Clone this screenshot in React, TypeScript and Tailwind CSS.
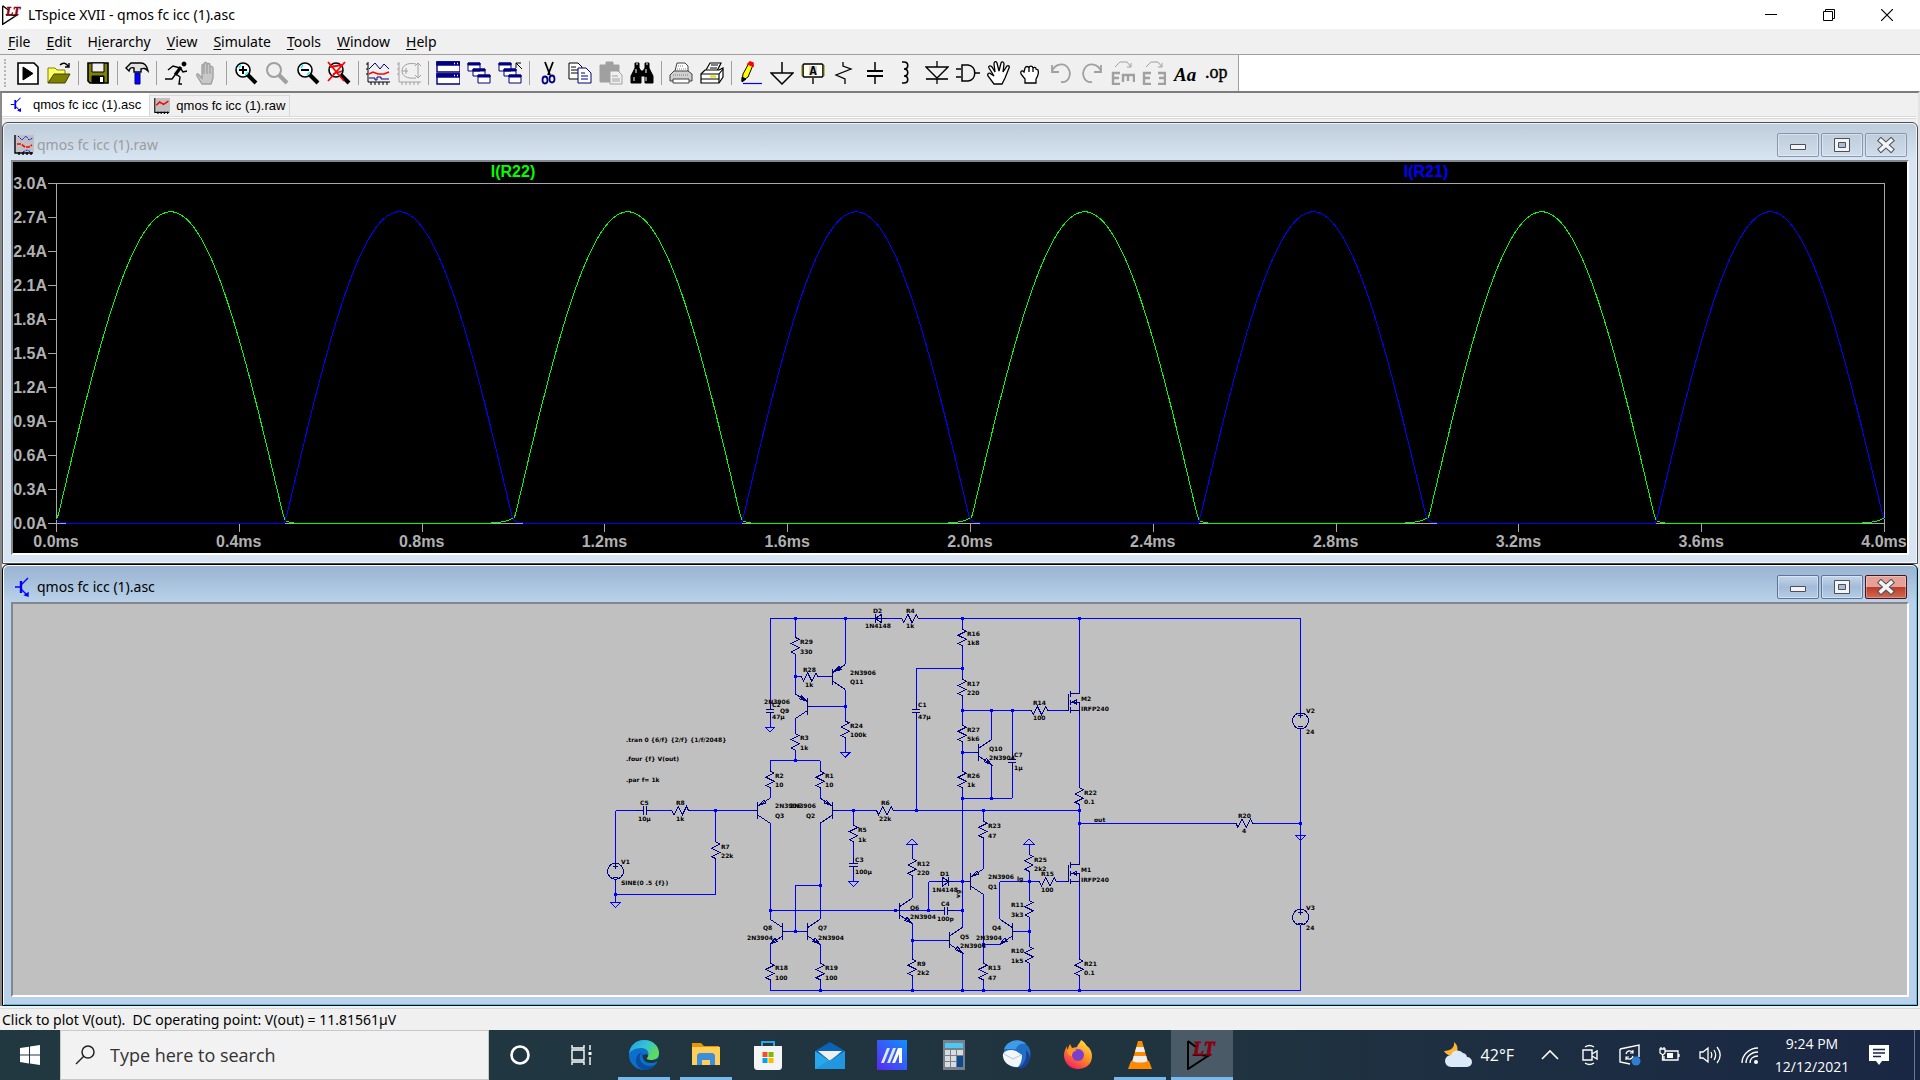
import type { ReactNode } from 'react'

type Point = [number, number]

/* ---------- shared bits ---------- */

function Icon({ children, size = 24, box = 24 }: { children: ReactNode; size?: number; box?: number }) {
  return (
    <svg width={size} height={size} viewBox={`0 0 ${box} ${box}`} fill="none" stroke="#000" aria-hidden="true">
      {children}
    </svg>
  )
}

function LtLogo({ size }: { size: number }) {
  return (
    <Icon size={size} box={30}>
      <path d="M1 1v28L24 14M1 1l8 6M6 15h8l8 1" strokeWidth="2" />
      <text x="6" y="15" fontFamily="Liberation Serif, serif" fontSize="18" fontWeight="700" fontStyle="italic" fill="#8b0010" stroke="#8b0010" strokeWidth="0.8">
        LT
      </text>
    </Icon>
  )
}

function TransistorIcon({ size }: { size: number }) {
  return (
    <Icon size={size} box={20}>
      <g stroke="#00f" strokeWidth="1.4">
        <path d="M1 10h5M14 1l-7 7M7 12l6 6" />
        <path d="M7 4v12" strokeWidth="2.4" />
        <path d="M11 18l3 1v-3z" fill="#00f" />
      </g>
    </Icon>
  )
}

function PlotIcon({ size, faded }: { size: number; faded?: boolean }) {
  return (
    <Icon size={size} box={20}>
      <path d="M2 0h18v17H2z" fill="#c0c0c0" stroke="none" />
      <path d="M1 0v18h18M5 17v3M9 17v3M13 17v3M17 17v3" strokeWidth="1.4" />
      {faded ? (
        <>
          <path d="M4 1l4 4 4-4 3 4 4-2M9 17l4-2 4 2" stroke="#00f" strokeDasharray="2 1" />
          <path d="M3 9h4l4 3h4l3-2" stroke="#f00" strokeWidth="1.6" strokeDasharray="4 1" />
        </>
      ) : (
        <path d="M3 9l4-4 5 3 6-4" stroke="#f00" strokeWidth="2" />
      )}
    </Icon>
  )
}

/* ---------- toolbar ---------- */

const lens = (
  <>
    <circle cx="9" cy="9" r="7" fill="#fff" strokeWidth="1.6" />
    <path d="M5 7l2-3M11 14l3-3" stroke="#0ff" strokeWidth="1.4" />
    <path d="M14 14l8 8" strokeWidth="4" />
  </>
)

const cascade = (
  <g stroke="#000080" fill="#fff">
    <path d="M1 2h12v8H1zM6 8h12v7H6zM11 14h12v8H11z" />
    <path d="M1 2h12v2H1zM6 8h12v2H6zM11 14h12v2H11z" fill="#000080" />
  </g>
)

const toolGroups: { name: string; icon: ReactNode }[][] = [
  [
    {
      name: 'New schematic',
      icon: (
        <>
          <path d="M2 2h16l4 4v17H2z" fill="#fff" strokeWidth="1.6" />
          <path d="M7 6v13l10-6.5z" fill="#000" />
        </>
      ),
    },
    {
      name: 'Open',
      icon: (
        <>
          <path d="M1 22V7h7l2 2h8v4" fill="#ffff60" stroke="#808000" />
          <path d="M1 22l6-9h16l-5 9z" fill="#808000" stroke="#404000" />
          <path d="M13 4c3-3 6-2 8 1M22 2v4h-4" strokeWidth="1.4" />
        </>
      ),
    },
  ],
  [
    {
      name: 'Save',
      icon: (
        <>
          <path d="M2 2h20v20H4l-2-2z" fill="#808000" strokeWidth="1.6" />
          <path d="M6 2h12v9H6z" fill="#f0f0f0" />
          <path d="M6 15h12v7H6z" fill="#000" />
          <path d="M14 16h3v5h-3z" fill="#fff" stroke="none" />
        </>
      ),
    },
  ],
  [
    {
      name: 'Control panel',
      icon: (
        <>
          <path d="M1 7l5-5h10c4 0 6 3 7 8-3-3-4-3-7-2v3H9V7c-3-1-4 0-5 3z" fill="#e0e0e0" strokeWidth="1.4" />
          <path d="M10 12h5v11h-5z" fill="#00f" stroke="#000080" />
        </>
      ),
    },
  ],
  [
    {
      name: 'Run',
      icon: (
        <>
          <circle cx="20" cy="3" r="2" fill="#000" />
          <path d="M17 6l-6 8" strokeWidth="3.2" />
          <path d="M16 7L9 5 4 9M17 8l2 3 4-1M12 13l4 3-1 7h3M11 14l-3 4H1" strokeWidth="1.4" />
        </>
      ),
    },
    {
      name: 'Halt',
      icon: (
        <path
          d="M7 23l-5-8c-1-2 1-3 2-1l3 3V5c0-2 2-2 2 0V3c0-2 3-2 3 0v1c0-2 3-2 3 0v2c0-1 3-1 3 1v10l-2 6zM9 5v8M12 4v9M15 6v7"
          fill="#c8c8c8"
          stroke="#a0a0a0"
          strokeWidth="1.4"
        />
      ),
    },
  ],
  [
    {
      name: 'Zoom in',
      icon: (
        <>
          {lens}
          <path d="M5 9h8M9 5v8" strokeWidth="2" />
        </>
      ),
    },
    {
      name: 'Pan',
      icon: (
        <g stroke="#a0a0a0">
          <circle cx="9" cy="9" r="7" strokeWidth="2" />
          <path d="M14 14l8 8" strokeWidth="4" />
        </g>
      ),
    },
    {
      name: 'Zoom out',
      icon: (
        <>
          {lens}
          <path d="M5 9h8" strokeWidth="2" />
        </>
      ),
    },
    {
      name: 'Zoom full extents',
      icon: (
        <>
          {lens}
          <path d="M1 1l16 19M18 1L1 20M3 6l12-2M6 13l9-3" stroke="#f00" strokeWidth="1.8" />
        </>
      ),
    },
  ],
  [
    {
      name: 'Autorange',
      icon: (
        <>
          <path d="M2 1v20h22M0 3h2M0 8h2M0 13h2M5 21v3M9 21v3M13 21v3M17 21v3M21 21v3" />
          <path d="M3 8l6-6 5 6 4-5 5 5M3 17h6v2h2v-3h4v2h8" stroke="#000080" />
          <path d="M3 13l4-2 5 2h6l5-2" stroke="#f00" strokeWidth="1.4" />
        </>
      ),
    },
    {
      name: 'Plot settings',
      icon: (
        <g stroke="#a0a0a0">
          <path d="M2 1v20h22M0 3h2M0 8h2M0 13h2M5 21v3M9 21v3M13 21v3M17 21v3M21 21v3" />
          <path d="M21 2v15M18 5l3-3 3 3M18 14l3 3 3-3M19 3C10 1 5 5 5 10s5 8 14 7M5 10h6M9 7v6" />
        </g>
      ),
    },
  ],
  [
    {
      name: 'Tile windows',
      icon: (
        <g fill="#fff" stroke="#000080" strokeWidth="1.4">
          <path d="M1 1h23v10H1zM1 13h23v10H1z" />
          <path d="M1 1h23v3H1zM1 13h23v3H1z" fill="#000080" />
          <path d="M18 2.500h1M21 2.500h1M18 14.500h1M21 14.500h1" stroke="#fff" />
        </g>
      ),
    },
    { name: 'Cascade windows', icon: cascade },
    {
      name: 'Close all windows',
      icon: (
        <>
          {cascade}
          <path d="M18 7V2h5M18 2l6 6" />
        </>
      ),
    },
  ],
  [
    {
      name: 'Cut',
      icon: (
        <>
          <path d="M8 1l5 13M16 1l-5 13" strokeWidth="1.8" />
          <g stroke="#000080" strokeWidth="1.8">
            <ellipse cx="8" cy="19" rx="2.500" ry="3.500" />
            <ellipse cx="15" cy="18" rx="2.500" ry="3.500" />
          </g>
        </>
      ),
    },
    {
      name: 'Copy',
      icon: (
        <>
          <path d="M1 2h9l4 4v12H1z" fill="#fff" />
          <path d="M3 6h5M3 9h7M3 12h7" />
          <path d="M10 7h8l5 5v10H10z" fill="#fff" stroke="#000080" />
          <path d="M13 12h4M13 15h7M13 18h7" stroke="#000080" />
        </>
      ),
    },
    {
      name: 'Paste',
      icon: (
        <>
          <path d="M1 4h19v17H1zM7 1h7v4H7z" fill="#a0a0a0" stroke="#a0a0a0" />
          <path d="M11 10h8l4 4v9H11z" fill="#f0f0f0" stroke="#a0a0a0" />
          <path d="M13 15h6M13 18h8M13 20h8" stroke="#a0a0a0" />
        </>
      ),
    },
    {
      name: 'Find',
      icon: (
        <>
          <path d="M5 2h4v5l2 3h2l2-3V2h4v5l4 8v7h-8v-7h-4v7H1v-7l4-8z" fill="#000" />
          <path d="M6 8v4M16 8v4M4 16v4M16 16v4M6 3h2M16 3h2" stroke="#fff" />
        </>
      ),
    },
  ],
  [
    {
      name: 'Print setup',
      icon: (
        <>
          <path d="M6 10l2-8h8l3 3v6" fill="#fff" stroke="#404040" />
          <path d="M1 14l4-4h14l4 3v7H1z" fill="#d0d0d0" stroke="#404040" />
          <path d="M4 18h16v4H4z" fill="#fff" stroke="#404040" />
          <path d="M9 5h6M8 8h9M4 14h16" stroke="#808080" strokeDasharray="1 1" />
        </>
      ),
    },
    {
      name: 'Print',
      icon: (
        <>
          <path d="M6 9l4-7h11l-4 8" fill="#fff" strokeWidth="1.200" />
          <path d="M11 4h7M10 7h7" />
          <path d="M1 13l4-4h14l4-2v9l-4 6H1z" fill="#fff" strokeWidth="1.200" />
          <path d="M1 13h18v9M19 13l4-5M1 18h18" strokeWidth="1.200" />
          <path d="M10 15.500h6" stroke="#dddd00" strokeWidth="2" />
        </>
      ),
    },
  ],
  [
    {
      name: 'Draw wire',
      icon: (
        <>
          <path d="M3 20l1-7 6-11 4 2-5 12z" fill="#ff0" />
          <path d="M3 21v-5l4 2z" fill="#000" />
          <path d="M9 3l2-2 3 1v3z" fill="#f00" stroke="#f00" strokeWidth="1.6" />
          <path d="M4 22.500h19" stroke="#00f" strokeWidth="1.2" />
        </>
      ),
    },
    { name: 'Ground', icon: <path d="M12 1v11M1 12h22L12 23z" strokeWidth="1.5" /> },
    {
      name: 'Label net',
      icon: (
        <>
          <path d="M3 3h18l1 1v11l-1 1H3l-1-1V4z" fill="#fffff0" strokeWidth="1.6" />
          <path d="M1 4v11M23 4v11" stroke="#808000" />
          <path d="M8 5h8v9H8z" fill="#d4d4d4" stroke="none" />
          <path d="M12 17v6" strokeWidth="1.4" />
          <text x="12" y="14" textAnchor="middle" fontFamily="Liberation Mono, monospace" fontSize="12" fontWeight="700" fill="#000" stroke="none">
            A
          </text>
        </>
      ),
    },
    { name: 'Resistor', icon: <path d="M11 1v4l8 3L4 14l9 4v5" strokeWidth="1.3" /> },
    {
      name: 'Capacitor',
      icon: (
        <>
          <path d="M12 1v9M12 14v9" strokeWidth="1.5" />
          <path d="M4 10h16M4 15h16" strokeWidth="2.2" />
        </>
      ),
    },
    { name: 'Inductor', icon: <path d="M8 1h2c5 0 5 7 0 7 5 0 5 7 0 7 5 0 5 7 0 7H8" strokeWidth="1.6" /> },
    {
      name: 'Diode',
      icon: (
        <>
          <path d="M12 0v6M12 18v5M1 6h22L12 17z" strokeWidth="1.3" />
          <path d="M1 18h22" strokeWidth="1.6" />
        </>
      ),
    },
    {
      name: 'Component',
      icon: (
        <>
          <path d="M0 8h5M0 16h5M18 12h6" strokeWidth="1.4" />
          <path d="M6 4v16h6c9-1 9-15 0-16z" strokeWidth="1.5" />
        </>
      ),
    },
    {
      name: 'Move',
      icon: (
        <path
          d="M7 23l-6-8c-1-2 1-4 3-2l3 2L2 7c-1-2 1-3 3-1l3 5L7 3c0-3 2-3 3-1l2 8 2-8c1-2 3-1 3 1l-1 8 4-6c1-1 3 0 2 2l-4 10-3 6z"
          fill="#fff"
          strokeWidth="1.3"
        />
      ),
    },
    {
      name: 'Drag',
      icon: (
        <path
          d="M7 22v-4l-4-5c-1-3 1-4 3-2l1-4c1-2 3-2 4 0 0-2 3-3 4 0 1-1 3-1 3 1l2 1c1 3 0 6-2 9v4zM11 7v4M15 7v4"
          fill="#fff"
          strokeWidth="1.3"
        />
      ),
    },
    { name: 'Undo', icon: <path d="M3 4v7h7M3 10C6 3 15 1 19 7s1 15-7 14" stroke="#a0a0a0" strokeWidth="1.8" /> },
    { name: 'Redo', icon: <path d="M21 4v7h-7M21 10C18 3 9 1 5 7s-1 15 7 14" stroke="#a0a0a0" strokeWidth="1.8" /> },
    {
      name: 'Rotate',
      icon: (
        <g stroke="#a0a0a0">
          <path d="M4 6l5-5h7l4 5M20 2v4h-4" />
          <path d="M9 12H2v11h7M2 17h6M12 21v-7h11v7M17 14v6" strokeWidth="2.4" />
        </g>
      ),
    },
    {
      name: 'Mirror',
      icon: (
        <g stroke="#a0a0a0">
          <path d="M4 6l5-5h7l4 5M20 2v4h-4" />
          <path d="M9 12H2v11h7M2 17h6M16 12h7v11h-7M23 17h-6" strokeWidth="2.4" />
        </g>
      ),
    },
    {
      name: 'Text',
      icon: (
        <text x="1" y="20" fontFamily="Liberation Serif, serif" fontSize="19" fontWeight="700" fontStyle="italic" fill="#000" stroke="none">
          Aa
        </text>
      ),
    },
    {
      name: 'SPICE directive',
      icon: (
        <text x="1" y="17" fontFamily="Liberation Serif, serif" fontSize="18" fill="#000" stroke="#000" strokeWidth="0.4">
          .op
        </text>
      ),
    },
  ],
]

function Toolbar() {
  return (
    <div role="toolbar" className="flex h-9 bg-white">
      <div className="flex items-center border-r border-[#a0a0a0] bg-[#f0f0f0] pr-[7px]">
        <span className="mr-1.5 ml-1 h-7 border-l-2 border-dotted border-[#b4b4b4]" />
        {toolGroups.map((group, i) => (
          <div key={i} className="flex items-center">
            {i > 0 && <span className="mx-[3px] h-6 w-0.5 border-r border-[#a0a0a0]" />}
            {group.map((tool) => (
              <button key={tool.name} type="button" aria-label={tool.name} className="flex h-9 w-[31px] items-center justify-center">
                <Icon>{tool.icon}</Icon>
              </button>
            ))}
          </div>
        ))}
      </div>
    </div>
  )
}

/* ---------- waveform ---------- */

const PEAK = 2.75
const PLOT = { left: 56, right: 1884, top: 183, bottom: 523 }

// Current through one output device, phase in periods (1 ms each)
function current(phase: number, leak: number) {
  const p = phase - Math.floor(phase)
  if (p <= 0.5) return Math.hypot(PEAK * Math.sin(2 * Math.PI * p), 0.04)
  return leak * Math.exp((p - 1) / 0.02) + 0.03 * Math.exp((0.5 - p) / 0.01)
}

function trace(shift: number, leak: number) {
  const points: string[] = []
  for (let x = PLOT.left; x <= PLOT.right; x += 1) {
    const t = ((x - PLOT.left) / (PLOT.right - PLOT.left)) * 4
    const y = PLOT.bottom - (current(t + shift, leak) / 3) * (PLOT.bottom - PLOT.top)
    points.push(`${x + 0.5},${(y + 0.5).toFixed(1)}`)
  }
  return points.join(' ')
}

function WaveformPlot() {
  const amps = Array.from({ length: 11 }, (_, i) => (3 - i * 0.3).toFixed(1) + 'A')
  const times = Array.from({ length: 11 }, (_, i) => (i * 0.4).toFixed(1) + 'ms')
  return (
    <svg className="block h-[391px] w-full bg-black" viewBox="13 162 1894 391" fill="none">
      <g shapeRendering="crispEdges">
        <rect x="56.500" y="183.500" width="1828" height="340" stroke="#a8a8a8" />
        {amps.map((label, i) => (
          <path key={label} d={`M48 ${183.5 + i * 34}h8`} stroke="#a8a8a8" />
        ))}
        {times.map((label, i) => (
          <path key={label} d={`M${56.5 + Math.round(i * 182.8)} 524v8`} stroke="#a8a8a8" />
        ))}
        <polyline points={trace(0, 0.05)} stroke="#00ff00" />
        <polyline points={trace(0.5, 0)} stroke="#0000ff" />
      </g>
      <g fontFamily="Liberation Sans, Arial, sans-serif" fontSize="16" fontWeight="700" fill="#b0b0b0">
        {amps.map((label, i) => (
          <text key={label} x="47" y={189 + i * 34} textAnchor="end">
            {label}
          </text>
        ))}
        {times.map((label, i) => (
          <text key={label} x={56 + i * 182.8} y="547" textAnchor="middle">
            {label}
          </text>
        ))}
        <text x="513" y="177" textAnchor="middle" fill="#00ff00">
          I(R22)
        </text>
        <text x="1426" y="177" textAnchor="middle" fill="#0000ff">
          I(R21)
        </text>
      </g>
    </svg>
  )
}

/* ---------- schematic ---------- */

// One grid step of the sheet, in drawing pixels
const GRID = 4.177
const gx = (c: number) => 615.5 + c * GRID
const gy = (r: number) => 618.5 + r * GRID

const line = (points: Point[], close = false) =>
  'M' + points.map(([c, r]) => `${gx(c).toFixed(2)} ${gy(r).toFixed(2)}`).join('L') + (close ? 'Z' : '')

// [column, row, column, row]
const wires: [number, number, number, number][] = [
  [37, 0, 61, 0], [65, 0, 68, 0], [73, 0, 164, 0], [37, 0, 37, 20], [37, 24, 37, 26],
  [43, 0, 43, 4], [43, 9, 43, 18], [43, 24, 43, 27], [43, 32, 43, 34], [43, 14, 44, 14], [49, 14, 51, 14],
  [55, 0, 55, 11], [55, 17, 55, 24], [55, 29, 55, 32], [47, 21, 55, 21],
  [37, 34, 49, 34], [37, 34, 37, 36], [49, 34, 49, 36], [37, 41, 37, 43], [49, 41, 49, 43],
  [37, 49, 37, 72], [49, 49, 49, 72], [43, 64, 49, 64], [43, 64, 43, 75], [41, 75, 45, 75],
  [37, 70, 77, 70], [81, 70, 83, 70], [37, 78, 37, 82], [49, 78, 49, 82], [37, 87, 37, 89], [49, 87, 49, 89],
  [37, 89, 164, 89], [0, 46, 5, 46], [9, 46, 13, 46], [18, 46, 33, 46], [53, 46, 62, 46], [67, 46, 111, 46],
  [0, 46, 0, 58], [0, 63, 0, 68], [0, 66, 24, 66], [24, 46, 24, 53], [24, 58, 24, 66],
  [57, 46, 57, 49], [57, 54, 57, 57], [57, 61, 57, 63], [72, 12, 72, 20], [72, 24, 72, 46], [72, 12, 83, 12],
  [83, 0, 83, 2], [83, 7, 83, 14], [83, 19, 83, 25], [83, 30, 83, 36], [83, 41, 83, 74], [83, 80, 83, 89],
  [83, 22, 99, 22], [104, 22, 108, 22], [83, 32, 86, 32], [90, 22, 90, 29], [90, 35, 90, 43],
  [95, 22, 95, 32], [95, 36, 95, 43], [83, 43, 95, 43], [111, 0, 111, 17], [111, 23, 111, 40],
  [111, 45, 111, 58], [111, 64, 111, 81], [111, 86, 111, 89], [111, 49, 148, 49], [153, 49, 164, 49],
  [164, 0, 164, 22], [164, 27, 164, 69], [164, 74, 164, 89], [88, 46, 88, 48], [88, 53, 88, 60],
  [88, 66, 88, 82], [88, 87, 88, 89], [88, 78, 92, 78], [92, 63, 92, 72], [92, 63, 101, 63], [106, 63, 108, 63],
  [75, 63, 77, 63], [81, 63, 84, 63], [75, 63, 75, 70], [71, 54, 71, 57], [71, 62, 71, 67], [71, 73, 71, 81],
  [71, 86, 71, 89], [71, 77, 79, 77], [99, 54, 99, 56], [99, 61, 99, 67], [99, 72, 99, 78], [99, 83, 99, 89],
  [96, 75, 99, 75],
]

const nodes: Point[] = [
  [43, 0], [55, 0], [83, 0], [111, 0], [83, 12], [43, 14], [55, 21], [83, 22], [90, 22], [95, 22], [83, 32],
  [43, 34], [83, 43], [90, 43], [72, 46], [24, 46], [57, 46], [88, 46], [111, 46], [111, 49], [164, 49],
  [83, 63], [99, 63], [49, 64], [0, 66], [37, 70], [67, 70], [75, 70], [83, 70], [43, 75], [99, 75],
  [71, 77], [88, 78], [49, 89], [71, 89], [83, 89], [88, 89], [99, 89], [111, 89],
]

const verticalResistors: Point[] = [
  [43, 4], [55, 24], [43, 27], [37, 36], [49, 36], [83, 2], [83, 14], [83, 25], [83, 36], [111, 40], [24, 53],
  [57, 49], [71, 57], [37, 82], [49, 82], [88, 82], [71, 81], [111, 81], [99, 78], [99, 67], [99, 56], [88, 48],
]
const horizontalResistors: Point[] = [[44, 14], [68, 0], [13, 46], [62, 46], [99, 22], [101, 63], [148, 49]]
const verticalCaps: Point[] = [[37, 20], [72, 20], [95, 32], [57, 57]]
const horizontalCaps: Point[] = [[5, 46], [77, 70]]
const grounds: Point[] = [[37, 26], [55, 32], [0, 68], [57, 63], [164, 52]]
const raisedGrounds: Point[] = [[71, 54], [99, 54]]
const sources: Point[] = [[0, 60.5], [164, 24.5], [164, 71.5]]

// Base column and row; dir is the side the collector and emitter are on
const transistors: { at: Point; dir: 1 | -1; pnp?: boolean }[] = [
  { at: [51, 14], dir: 1, pnp: true },
  { at: [47, 21], dir: -1, pnp: true },
  { at: [33, 46], dir: 1, pnp: true },
  { at: [53, 46], dir: -1, pnp: true },
  { at: [84, 63], dir: 1, pnp: true },
  { at: [41, 75], dir: -1 },
  { at: [45, 75], dir: 1 },
  { at: [67, 70], dir: 1 },
  { at: [79, 77], dir: 1 },
  { at: [96, 75], dir: -1 },
  { at: [86, 32], dir: 1 },
]

const zigzag: Point[] = [[0, 0], [0, 0.5], [1, 1], [-1, 2], [1, 3], [-1, 4], [0, 4.5], [0, 5]]

function resistorPath([c, r]: Point, horizontal = false) {
  return line(zigzag.map(([a, b]) => (horizontal ? [c + b, r + a] : [c + a, r + b])))
}

function capPath([c, r]: Point, horizontal = false) {
  const at = (a: number, b: number): Point => (horizontal ? [c + b, r + a] : [c + a, r + b])
  return [
    line([at(0, 0), at(0, 1.7)]),
    line([at(-1, 1.7), at(1, 1.7)]),
    line([at(-1, 2.4), at(1, 2.4)]),
    line([at(0, 2.4), at(0, 4)]),
  ].join('')
}

function transistorPath({ at: [c, r], dir, pnp }: (typeof transistors)[number]) {
  const p = (a: number, b: number): Point => [c + a * dir, r + b]
  const arrow = pnp
    ? line([p(1.2, -1.2), p(2.5, -2.5), p(3, -1.8)], true)
    : line([p(4, 3), p(2.8, 1.5), p(2.3, 2.3)], true)
  return [
    line([p(0, 0), p(1, 0)]),
    line([p(1, -2), p(1, 2)]),
    line([p(1, -1), p(4, -3)]),
    line([p(1, 1), p(4, 3)]),
    arrow,
  ].join('')
}

function mosfetPath(gateRow: number) {
  const p = (a: number, b: number): Point => [108 + a, gateRow + b]
  return [
    line([p(-0.5, 0), p(0.4, 0), p(0.4, -4)]),
    line([p(0.9, -4.6), p(0.9, -3.2)]),
    line([p(0.9, -2.5), p(0.9, -1.4)]),
    line([p(0.9, -0.7), p(0.9, 0.6)]),
    line([p(0.9, -4), p(3, -4), p(3, -5)]),
    line([p(0.9, -2), p(3, -2), p(3, 1)]),
    line([p(0.9, 0), p(3, 0)]),
    line([p(1.4, -2), p(2.4, -2.5), p(2.4, -1.5)], true),
  ].join('')
}

function diodePath([c, r]: Point, dir: 1 | -1) {
  const p = (a: number, b: number): Point => [c + a * dir, r + b]
  return [
    line([p(-2, 0), p(2, 0)]),
    line([p(-0.8, -1.1), p(-0.8, 1.1), p(0.8, 0)], true),
    line([p(0.8, -1.1), p(0.8, 1.1)]),
  ].join('')
}

function groundPath([c, r]: Point, up = false) {
  return line([[c - 1.2, r], [c + 1.2, r], [c, r + (up ? -1.2 : 1.2)]], true)
}

// Text with its left edge and baseline
const labels: [string, number, number][] = [
  ['D2', 873, 613], ['1N4148', 865, 628], ['R4', 906, 613], ['1k', 906, 628],
  ['R29', 800, 644], ['330', 800, 654], ['R28', 803, 672], ['1k', 805, 687],
  ['2N3906', 850, 675], ['Q11', 850, 684], ['2N3906', 764, 704], ['C2', 772, 707], ['Q9', 780, 713], ['47µ', 772, 719],
  ['R24', 850, 728], ['100k', 850, 737], ['R3', 800, 740], ['1k', 800, 750],
  ['.tran 0 {6/f} {2/f} {1/f/2048}', 626, 742], ['.four {f} V(out)', 626, 761], ['.par f= 1k', 626, 782],
  ['R2', 775, 778], ['10', 775, 787], ['R1', 825, 778], ['10', 825, 787],
  ['R16', 967, 636], ['1k8', 967, 645], ['R17', 967, 686], ['220', 967, 695], ['C1', 918, 707], ['47µ', 918, 719],
  ['R27', 967, 732], ['5k6', 967, 741], ['R26', 967, 778], ['1k', 967, 787],
  ['R14', 1033, 705], ['100', 1033, 720], ['M2', 1081, 701], ['IRFP240', 1081, 711],
  ['Q10', 989, 751], ['2N3904', 989, 760], ['C7', 1014, 757], ['1µ', 1014, 770],
  ['V2', 1306, 713], ['24', 1306, 734], ['R22', 1084, 795], ['0.1', 1084, 804],
  ['C5', 640, 805], ['10µ', 638, 821], ['R8', 676, 805], ['1k', 676, 821],
  ['2N3906', 775, 808], ['Q3', 775, 818], ['2N3906', 790, 808], ['Q2', 806, 818],
  ['R6', 881, 805], ['22k', 879, 821], ['R5', 858, 832], ['1k', 858, 842], ['C3', 855, 862], ['100µ', 855, 874],
  ['R7', 721, 849], ['22k', 721, 858], ['V1', 621, 864], ['SINE(0 .5 {f})', 621, 885],
  ['R12', 917, 866], ['220', 917, 875], ['D1', 940, 876], ['1N4148', 932, 892], ['C4', 941, 906], ['100p', 937, 921],
  ['Q6', 910, 910], ['2N3904', 910, 919], ['Q8', 763, 930], ['2N3904', 747, 940], ['Q7', 818, 930], ['2N3904', 818, 940],
  ['R18', 775, 970], ['100', 775, 980], ['R19', 825, 970], ['100', 825, 980], ['R9', 917, 966], ['2k2', 917, 975],
  ['Q5', 960, 939], ['2N3904', 960, 948], ['R23', 988, 828], ['47', 988, 838], ['2N3906', 988, 879], ['Q1', 988, 889],
  ['lg', 1017, 881], ['R25', 1034, 862], ['2k2', 1034, 871], ['R15', 1041, 876], ['100', 1041, 892],
  ['M1', 1081, 872], ['IRFP240', 1081, 882], ['R11', 1011, 907], ['3k3', 1011, 917], ['Q4', 992, 930], ['2N3904', 976, 940],
  ['R10', 1011, 953], ['1k5', 1011, 963], ['R13', 988, 970], ['47', 988, 980], ['R21', 1084, 966], ['0.1', 1084, 975],
  ['out', 1094, 822], ['R20', 1238, 818], ['4', 1242, 833], ['V3', 1306, 910], ['24', 1306, 930],
]

function Schematic() {
  return (
    <svg className="block h-[391px] w-full bg-[#c0c0c0]" viewBox="13 604 1894 391" fill="none">
      <g stroke="#0000ff" shapeRendering="crispEdges">
        {wires.map(([a, b, c, d]) => (
          <path key={`${a},${b},${c},${d}`} d={line([[a, b], [c, d]])} />
        ))}
        {grounds.map((at) => (
          <path key={at.join()} d={groundPath(at)} />
        ))}
        {raisedGrounds.map((at) => (
          <path key={at.join()} d={groundPath(at, true)} />
        ))}
        {nodes.map(([c, r]) => (
          <rect key={`${c},${r}`} x={Math.floor(gx(c)) - 1} y={Math.floor(gy(r)) - 1} width="3" height="3" fill="#0000ff" stroke="none" />
        ))}
      </g>
      <g stroke="#00008b" shapeRendering="crispEdges">
        {verticalResistors.map((at) => (
          <path key={at.join()} d={resistorPath(at)} />
        ))}
        {horizontalResistors.map((at) => (
          <path key={at.join()} d={resistorPath(at, true)} />
        ))}
        {verticalCaps.map((at) => (
          <path key={at.join()} d={capPath(at)} />
        ))}
        {horizontalCaps.map((at) => (
          <path key={at.join()} d={capPath(at, true)} />
        ))}
        {transistors.map((q) => (
          <path key={q.at.join()} d={transistorPath(q)} />
        ))}
        <path d={mosfetPath(22)} />
        <path d={mosfetPath(63)} />
        <path d={diodePath([63, 0], -1)} />
        <path d={diodePath([79, 63], 1)} />
        {sources.map(([c, r]) => (
          <g key={`${c},${r}`}>
            <circle cx={gx(c)} cy={gy(r)} r="8" />
            <path d={line([[c, r - 2.5], [c, r - 0.6]]) + line([[c - 0.6, r - 1.2], [c + 0.6, r - 1.2]])} />
            <path d={line([[c - 0.6, r + 1.4], [c + 0.6, r + 1.4]]) + line([[c, r + 2], [c, r + 2.5]])} />
          </g>
        ))}
      </g>
      <g fontFamily="DejaVu Sans, Verdana, sans-serif" fontSize="6" fontWeight="700" fill="#000">
        {labels.map(([text, x, y]) => (
          <text key={`${x},${y}`} x={x} y={y}>
            {text}
          </text>
        ))}
        <text transform="translate(960 898) rotate(-90)">vg</text>
      </g>
    </svg>
  )
}

/* ---------- MDI windows ---------- */

interface ChildWindowProps {
  title: string
  icon: ReactNode
  active?: boolean
  children: ReactNode
}

function ChildWindow({ title, icon, active, children }: ChildWindowProps) {
  const frame = active ? 'border-black bg-[#b9d1ea]' : 'border-[#4d4d52] bg-[#d7e4f2]'
  const edge = active ? 'shadow-[inset_1px_1px_0_#fff,inset_-1px_-1px_0_#27d0f5]' : 'shadow-[inset_0_0_0_1px_#eef4fa]'
  const bar = active ? 'from-[#99b4d1] to-[#b9d1ea]' : 'from-[#bfcddb] to-[#d7e4f2]'
  const button = active
    ? 'border-[#5f7596] bg-linear-to-b from-[#c3d5ea] via-[#a3bbd8] to-[#b5cce6]'
    : 'border-[#8795b2] bg-linear-to-b from-[#bfcddb] to-[#cfdcea]'
  const close = active
    ? 'border-[#4d0f18] bg-linear-to-b from-[#e5a198] from-50% via-[#b93a26] via-50% to-[#cf6a52]'
    : button
  const text = active ? 'text-black' : 'text-[#9c9c9c]'

  return (
    <section className={`rounded-t-[6px] border px-px pt-px pb-px ${frame} ${edge}`}>
      <header className={`flex h-9 items-center justify-between rounded-t-[5px] bg-linear-to-b pt-1.5 pr-[9px] pl-2.5 ${bar}`}>
        <div className="flex items-center gap-[3px]">
          {icon}
          <h2 className={`font-['Noto_Sans',sans-serif] text-sm ${text}`}>{title}</h2>
        </div>
        <div className="flex gap-0.5">
          <button type="button" aria-label="Minimize" className={`flex h-6 w-[42px] items-center justify-center rounded-xs border shadow-[inset_0_0_0_1px_rgba(255,255,255,0.4)] ${button}`}>
            <svg width="18" height="16" viewBox="0 0 18 16">
              <path d="M1.500 7.500h15v5h-15z" fill="#f4f4f4" stroke="#4a4f5c" />
            </svg>
          </button>
          <button type="button" aria-label="Maximize" className={`flex h-6 w-[42px] items-center justify-center rounded-xs border shadow-[inset_0_0_0_1px_rgba(255,255,255,0.4)] ${button}`}>
            <svg width="18" height="16" viewBox="0 0 18 16">
              <path d="M1.500 1.500h15v13h-15z" fill="#f4f4f4" stroke="#4a4f5c" />
              <path d="M5.500 5.500h7v5h-7z" fill="#a9bdd6" stroke="#4a4f5c" />
            </svg>
          </button>
          <button type="button" aria-label="Close" className={`flex h-6 w-[42px] items-center justify-center rounded-xs border shadow-[inset_0_0_0_1px_rgba(255,255,255,0.3)] ${close}`}>
            <svg width="18" height="16" viewBox="0 0 18 16">
              <path d="M4 3.500L14 12.500M14 3.500L4 12.500" stroke="#4a4f5c" strokeWidth="5.600" strokeLinecap="square" />
              <path d="M4 3.500L14 12.500M14 3.500L4 12.500" stroke="#f4f4f4" strokeWidth="3.600" strokeLinecap="square" />
            </svg>
          </button>
        </div>
      </header>
      <div className="mx-[7px] mb-[7px] border-2 border-t-[#83868a] border-r-white border-b-white border-l-[#83868a]">{children}</div>
    </section>
  )
}

/* ---------- taskbar ---------- */

const apps: { name: string; open?: boolean; active?: boolean; icon: ReactNode }[] = [
  { name: 'Cortana', icon: <circle cx="15" cy="15" r="8.500" stroke="#fff" strokeWidth="2.600" /> },
  {
    name: 'Task view',
    icon: (
      <g stroke="#fff" strokeWidth="1.4">
        <path d="M5 10h12v10H5zM5 5v3h12V5M5 25v-3h12v3M23 5v5M23 17v8" />
        <path d="M21.500 12h3v3h-3z" fill="#fff" stroke="none" />
      </g>
    ),
  },
  {
    name: 'Microsoft Edge',
    open: true,
    icon: (
      <g stroke="none">
        <defs>
          <linearGradient id="edge-top" x1="0" y1="0" x2="1" y2="0.6">
            <stop offset="0" stopColor="#1b9de2" />
            <stop offset="0.5" stopColor="#34c1d6" />
            <stop offset="1" stopColor="#62dc55" />
          </linearGradient>
        </defs>
        <circle cx="15" cy="15" r="15" fill="#0c6fce" />
        <path d="M0 14C1 5 7 0 15 0c9 0 15 6 15 13 0 5-4 7-8 7-3 0-5-1-4-2 4-5 0-10-6-10C6 8 1 11 0 14z" fill="url(#edge-top)" />
        <path d="M13 12c-4 4-3 13 8 14 3 0 5-1 6-2-3 5-8 6-12 6-6-2-9-7-8-11 1-4 3-6 6-7z" fill="#0a4d9e" />
        <path d="M14 13c-2 5 2 11 9 10 3 0 5-2 6-2l1 2-2 2 2-8c-2 3-5 3-8 3-3 0-5-1-4-2 2-2 1-5-4-3z" fill="#20353f" />
      </g>
    ),
  },
  {
    name: 'File Explorer',
    open: true,
    icon: (
      <g stroke="none">
        <path d="M1 3h9l3 3h15v8H1z" fill="#e8930c" />
        <path d="M1 7h28v18H1z" fill="#ffcf57" />
        <path d="M6 25V15l2-2h14l2 2v10h-5v-5h-8v5z" fill="#3d8fdd" />
      </g>
    ),
  },
  {
    name: 'Microsoft Store',
    icon: (
      <g stroke="none">
        <path d="M9 7V2h12v5" fill="none" stroke="#2ba5e8" strokeWidth="2" />
        <path d="M1 6h28v20c0 3-1 4-4 4H5c-3 0-4-1-4-4z" fill="#f4f4f4" />
        <path d="M9.500 12h5v5h-5z" fill="#f25022" />
        <path d="M15.500 12h5v5h-5z" fill="#7fba00" />
        <path d="M9.500 18h5v5h-5z" fill="#00a4ef" />
        <path d="M15.500 18h5v5h-5z" fill="#ffb900" />
      </g>
    ),
  },
  {
    name: 'Mail',
    icon: (
      <g stroke="none">
        <path d="M0 11L15 2l15 9v6H0z" fill="#0a63b5" />
        <path d="M3 11h24L15 21z" fill="#f0f0f0" />
        <path d="M0 11l15 10 15-10v18H0z" fill="#28a8ea" />
        <path d="M0 29l30-18v18z" fill="#1c86d8" opacity="0.5" />
      </g>
    ),
  },
  {
    name: 'MyASUS',
    icon: (
      <g stroke="none">
        <defs>
          <linearGradient id="asus" x1="0" y1="1" x2="1" y2="0">
            <stop offset="0" stopColor="#5a28f0" />
            <stop offset="1" stopColor="#1090ff" />
          </linearGradient>
        </defs>
        <path d="M0 0h30v30H0z" fill="url(#asus)" />
        <path d="M4 23l6-15h3L7 23zM10 23l6-15h3l-6 15z" fill="#dfe6ff" />
        <path d="M15 23l6-15h4v15h-3v-9l-4 9z" fill="#fff" />
      </g>
    ),
  },
  {
    name: 'Calculator',
    icon: (
      <g stroke="none">
        <path d="M4 0h22v30H4z" fill="#7a8089" />
        <path d="M6 3h18v5H6z" fill="#4cc8f4" />
        <path d="M6 10h5v5H6zM12 10h5v5h-5zM18 10h6v5h-6zM6 16h5v5H6zM12 16h5v5h-5zM6 22h5v5H6zM12 22h5v5h-5z" fill="#d8dce0" />
        <path d="M18 16h6v11h-6z" fill="#0b4a8f" />
      </g>
    ),
  },
  {
    name: 'Thunderbird',
    icon: (
      <g stroke="none">
        <circle cx="16" cy="14" r="13.500" fill="#1f6fc4" />
        <path d="M3 9C7-1 20-2 25 4c-5-1-9 1-10 5z" fill="#3f9be8" />
        <path d="M2 14c2-4 8-5 13-3l6 4c0 5-1 9-4 12C9 28 1 22 2 14z" fill="#f2f5fa" />
        <path d="M3 14l9 5 8-4" fill="none" stroke="#b8c4d4" />
        <path d="M17 28c7-4 9-10 8-18 5 4 5 12 0 16-2 2-5 3-8 2z" fill="#1c3f98" />
      </g>
    ),
  },
  {
    name: 'Firefox',
    icon: (
      <g stroke="none">
        <defs>
          <linearGradient id="fox" x1="0.8" y1="0" x2="0.2" y2="1">
            <stop offset="0" stopColor="#ffe14a" />
            <stop offset="0.5" stopColor="#ff8a1f" />
            <stop offset="1" stopColor="#f5156c" />
          </linearGradient>
        </defs>
        <path d="M18 0c4 2 5 5 6 6 3 2 5 6 5 10 0 8-6 13-14 13S1 23 1 15c0-4 2-7 3-9v4l3-6 2 4 5-1C15 4 17 3 18 0z" fill="url(#fox)" />
        <circle cx="15" cy="15" r="6" fill="#7a3fd0" />
        <path d="M4 10c4-2 7-1 10 1-4 0-5 2-5 5-3 0-5-3-5-6z" fill="#ff9a2a" />
      </g>
    ),
  },
  {
    name: 'VLC media player',
    open: true,
    icon: (
      <g stroke="none">
        <path d="M6 21h18l3 8H3z" fill="#ff8a00" />
        <path d="M13 1h4l6 21c-3 3-13 3-16 0z" fill="#ff8a00" />
        <path d="M11.400 7h7.200l1.500 5h-10.200zM8.800 16h12.400l1.400 5c-4 2-11 2-15.200 0z" fill="#eee" />
      </g>
    ),
  },
  { name: 'LTspice XVII', open: true, active: true, icon: <LtLogo size={30} /> },
]

const tray: { name: string; icon: ReactNode }[] = [
  { name: 'Show hidden icons', icon: <path d="M4 16l8-8 8 8" strokeWidth="1.600" /> },
  { name: 'Meet now', icon: <path d="M5 7h9v10H5zM14 11l5-3v8l-5-3M7 4c3-2 6-2 9 0M7 20c3 2 6 2 9 0" strokeWidth="1.400" /> },
  {
    name: 'Updates',
    icon: (
      <>
        <path d="M2 6l19-4v12M2 6v13l10 2" strokeWidth="1.400" />
        <path d="M8 11c1-4 6-4 7-1M15 7v3h-3M15 13c-1 4-6 4-7 1M8 17v-3h3" strokeWidth="1.200" />
        <circle cx="18" cy="18" r="4.500" fill="#2f7fd0" stroke="none" />
      </>
    ),
  },
  {
    name: 'Battery',
    icon: (
      <>
        <path d="M7 8h13v9H6v-4M21 11v3M2 6h5v4l-2 2-3-2zM3 6V4M6 6V4M4.500 12v5H7" strokeWidth="1.300" />
        <path d="M9 10h6v5H9z" fill="#fff" stroke="none" />
      </>
    ),
  },
  { name: 'Volume', icon: <path d="M2 9h3l5-4v14l-5-4H2zM13 9c1 2 1 4 0 6M16 7c2 3 2 7 0 10M19 4c4 5 4 11 0 16" strokeWidth="1.300" /> },
  {
    name: 'Wi-Fi',
    icon: (
      <>
        <path d="M4 20C4 12 11 5 20 5M8 20c0-6 5-11 12-11M12 20c0-4 3-7 8-7" strokeWidth="1.400" />
        <circle cx="18" cy="19" r="2" fill="#fff" stroke="none" />
      </>
    ),
  },
]

function Taskbar() {
  return (
    <footer className="flex h-[50px] bg-linear-to-r from-[#213841] via-[#20343f] via-60% to-[#1a2744] text-white">
      <button type="button" aria-label="Start" className="flex w-[60px] items-center justify-center">
        <svg width="20" height="20" viewBox="0 0 20 20" fill="#fff">
          <path d="M0 3l9-1.300V9.500H0zM10 1.500L20 0v9.500H10zM0 10.500h9v8L0 17zM10 10.500h10V20l-10-1.500z" />
        </svg>
      </button>
      <label className="flex w-[429px] items-center gap-[15px] border border-[#c8c8c8] bg-[#f2f2f2] pl-3.5 text-[#222]">
        <svg width="20" height="20" viewBox="0 0 20 20" fill="none" stroke="#222" strokeWidth="1.500">
          <circle cx="13" cy="7" r="6" />
          <path d="M9 11l-8 8" />
        </svg>
        <input type="text" aria-label="Search" placeholder="Type here to search" className="flex-1 bg-transparent text-lg outline-none placeholder:text-[#333]" />
      </label>
      {apps.map((app) => (
        <button
          key={app.name}
          type="button"
          aria-label={app.name}
          className={`flex w-[62px] flex-col items-center justify-between pt-2.5 ${app.active ? 'bg-[#4a5a66]' : ''}`}
        >
          <Icon size={30} box={30}>
            {app.icon}
          </Icon>
          {app.open && <span className={`h-[3px] bg-[#76b9ed] ${app.active ? 'w-full' : 'w-[52px]'}`} />}
        </button>
      ))}
      <div className="ml-auto flex items-center">
        <button type="button" className="flex items-center gap-2 pr-4 text-base">
          <svg width="30" height="26" viewBox="0 0 30 26">
            <path d="M11 0c1 5-3 9-10 9 2 4 7 6 11 3 4-3 3-9-1-12z" fill="#ffb52e" />
            <path d="M8 25a6 6 0 010-12 7 7 0 0112-2 5 5 0 014 4 5 5 0 010 10z" fill="#dbe9f8" />
          </svg>
          42°F
        </button>
        {tray.map((item) => (
          <button key={item.name} type="button" aria-label={item.name} className="flex h-full w-10 items-center justify-center">
            <svg width="24" height="24" viewBox="0 0 24 24" fill="none" stroke="#fff">
              {item.icon}
            </svg>
          </button>
        ))}
        <time className="w-[84px] text-center text-sm leading-[23px]">
          9:24 PM
          <br />
          12/12/2021
        </time>
        <button type="button" aria-label="Notifications" className="mr-2.5 flex w-[50px] justify-center">
          <svg width="20" height="20" viewBox="0 0 20 20">
            <path d="M0 0h20v16h-7l-3 4-3-4H0z" fill="#fff" />
            <path d="M4 4.500h12M4 8h12M4 11.500h8" stroke="#1a2744" strokeWidth="1.300" />
          </svg>
        </button>
        <span className="h-[50px] w-1.5 border-l border-[#6b7890]" />
      </div>
    </footer>
  )
}

const menus = ['File', 'Edit', 'Hierarchy', 'View', 'Simulate', 'Tools', 'Window', 'Help']
// Position of each menu's access key
const accessKeys: Record<string, number> = { Hierarchy: 1 }

export default function App() {
  return (
    <div className="flex min-h-screen flex-col bg-[#f0f0f0] font-['Open_Sans','Noto_Sans',sans-serif] text-black">
      <header className="flex h-[29px] items-center justify-between bg-white">
        <div className="flex items-center gap-1.5 pl-0.5">
          <LtLogo size={20} />
          <h1 className="font-['Noto_Sans',sans-serif] text-sm">LTspice XVII - qmos fc icc (1).asc</h1>
        </div>
        <div className="flex pr-1">
          <button type="button" aria-label="Minimize" className="flex h-7 w-[58px] items-center justify-center">
            <svg width="12" height="12" viewBox="0 0 12 12" stroke="#000">
              <path d="M0 5.500h12" />
            </svg>
          </button>
          <button type="button" aria-label="Restore" className="flex h-7 w-[58px] items-center justify-center">
            <svg width="12" height="12" viewBox="0 0 12 12" fill="none" stroke="#000">
              <path d="M0.500 2.500h9v9h-9zM2.500 2.500v-2h9v9h-2" />
            </svg>
          </button>
          <button type="button" aria-label="Close" className="flex h-7 w-[58px] items-center justify-center">
            <svg width="12" height="12" viewBox="0 0 12 12" stroke="#000" strokeWidth="1.200">
              <path d="M0 0l12 12M12 0L0 12" />
            </svg>
          </button>
        </div>
      </header>

      <nav className="flex h-[26px] items-center gap-4 border-b border-[#a0a0a0] pl-2 font-['Noto_Sans',sans-serif] text-sm">
        {menus.map((menu) => {
          const key = accessKeys[menu] ?? 0
          return (
            <button key={menu} type="button">
              {menu.slice(0, key)}
              <span className="underline underline-offset-2">{menu[key]}</span>
              {menu.slice(key + 1)}
            </button>
          )
        })}
      </nav>

      <Toolbar />

      <main className="flex-1 border-t-2 border-r-2 border-l-2 border-t-[#7c7c7c] border-r-[#e3e3e3] border-l-[#8a8a8a]">
        <div role="tablist" className="flex h-[23px] items-end font-['Liberation_Sans',Arial,sans-serif] text-[13px] leading-5">
          <button type="button" role="tab" aria-selected="true" className="flex h-full items-center gap-2 bg-white pr-2 pl-2">
            <TransistorIcon size={15} />
            qmos fc icc (1).asc
          </button>
          <button type="button" role="tab" aria-selected="false" className="flex h-[21px] items-center gap-1.5 border border-b-0 border-[#d9d9d9] pr-1 pl-1">
            <PlotIcon size={16} />
            qmos fc icc (1).raw
          </button>
        </div>
        <div className="mr-0.5 mb-[3px] h-[3px] border-y border-[#d9d9d9] bg-white" />
        <ChildWindow title="qmos fc icc (1).raw" icon={<PlotIcon size={20} faded />}>
          <WaveformPlot />
        </ChildWindow>
        <ChildWindow title="qmos fc icc (1).asc" icon={<TransistorIcon size={20} />} active>
          <Schematic />
        </ChildWindow>
      </main>

      <div role="status" className="mt-0.5 flex h-[22px] items-center border-t border-[#d9d9d9] pt-px pl-0.5 font-['Noto_Sans',sans-serif] text-sm whitespace-pre">
        Click to plot V(out).  DC operating point: V(out) = 11.81561µV
      </div>
      <Taskbar />
    </div>
  )
}
